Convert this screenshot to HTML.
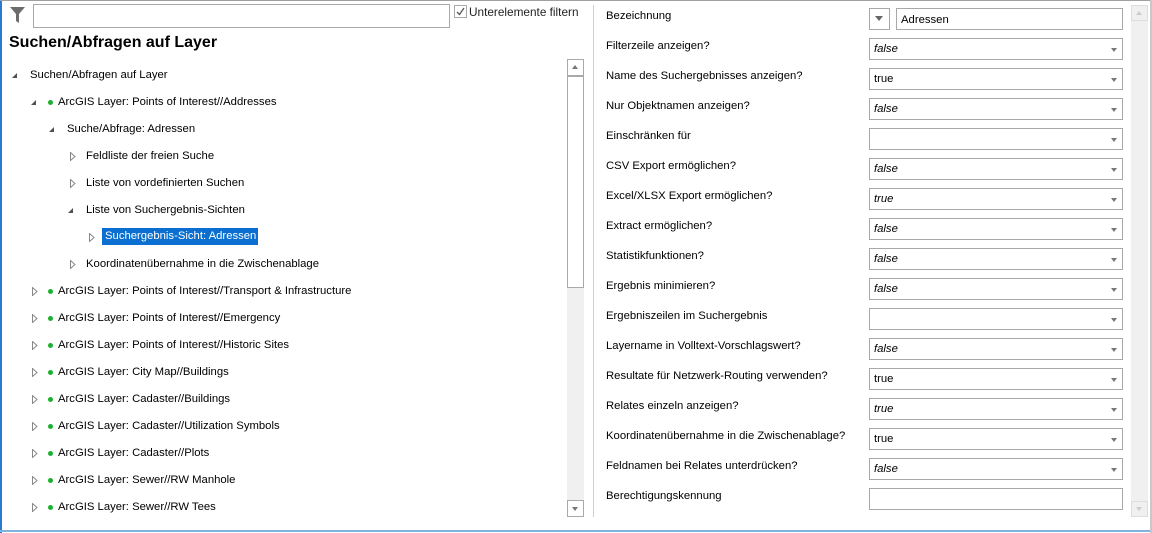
<!DOCTYPE html>
<html><head><meta charset="utf-8"><style>
*{margin:0;padding:0;box-sizing:border-box}
body{width:1152px;height:533px;background:#fff;font-family:"Liberation Sans",sans-serif;font-size:11.3px;color:#000;position:relative;overflow:hidden}
.a{position:absolute;white-space:nowrap}
.r{position:absolute;height:16px;line-height:16px;white-space:nowrap}
.dot{display:inline-block;width:5px;height:5px;border-radius:50%;background:#1db030;position:absolute;top:6px}
.tc{position:absolute;top:6px;width:0;height:0;border-left:5px solid transparent;border-bottom:5px solid #505050}
.box{position:absolute;left:869px;width:254px;height:22px;border:1px solid #a9a9a9;background:#fff;line-height:20px;padding-left:4px}
.box i{font-style:italic}
.arr{position:absolute;right:5px;top:9px;width:0;height:0;border-left:3px solid transparent;border-right:3px solid transparent;border-top:4px solid #777}
.lbl{position:absolute;left:606px;white-space:nowrap;top:0}
</style></head><body>
<div class="a" style="left:0;top:0;width:2px;height:533px;background:#2a7bd0"></div>
<div class="a" style="left:0;top:530px;width:1152px;height:2px;background:#7fb3e0"></div>
<div class="a" style="left:0;top:0;width:1152px;height:1px;background:#a0a0a0"></div>
<div class="a" style="left:1150px;top:0;width:2px;height:533px;background:#c8c8c8"></div>
<svg class="a" style="left:10px;top:7px" width="15" height="16" viewBox="0 0 15 16"><path d="M0 0H15L9 7V16L6 14V7Z" fill="#6d6d6d"/></svg>
<div class="a" style="left:33px;top:4px;width:417px;height:24px;border:1px solid #a9a9a9"></div>
<div class="a" style="left:454px;top:5px;width:13px;height:13px;border:1px solid #a9a9a9"></div>
<svg class="a" style="left:456px;top:7px" width="9" height="9"><path d="M1 5L3.5 7.5L8 1" stroke="#555" fill="none" stroke-width="1.3"/></svg>
<div class="a" style="left:469px;top:5px;line-height:14px;font-size:11.8px;color:#222">Unterelemente filtern</div>
<div class="a" style="left:9px;top:33px;font-size:16px;font-weight:bold;line-height:20px">Suchen/Abfragen auf Layer</div>
<div class="a" style="left:567px;top:59px;width:17px;height:458px;background:#f0f0f0"></div>
<div class="a" style="left:567px;top:59px;width:17px;height:17px;border:1px solid #a9a9a9;background:#fff"></div>
<div class="a" style="left:572px;top:65px;border-left:3px solid transparent;border-right:3px solid transparent;border-bottom:4px solid #777"></div>
<div class="a" style="left:567px;top:76px;width:17px;height:212px;border:1px solid #a9a9a9;background:#fff"></div>
<div class="a" style="left:567px;top:500px;width:17px;height:17px;border:1px solid #a9a9a9;background:#fff"></div>
<div class="a" style="left:572px;top:507px;border-left:3px solid transparent;border-right:3px solid transparent;border-top:4px solid #777"></div>
<div class="r" style="top:67px;left:12px;width:400px"><span class="tc" style="left:0"></span><span style="position:absolute;left:18px">Suchen/Abfragen auf Layer</span></div>
<div class="r" style="top:94px;left:31px;width:400px"><span class="tc" style="left:0"></span><span class="dot" style="left:17px"></span><span style="position:absolute;left:27px">ArcGIS Layer: Points of Interest//Addresses</span></div>
<div class="r" style="top:121px;left:49px;width:400px"><span class="tc" style="left:0"></span><span style="position:absolute;left:18px">Suche/Abfrage: Adressen</span></div>
<div class="r" style="top:148px;left:70px;width:400px"><svg style="position:absolute;left:0;top:4px" width="6" height="9"><path d="M0.5 0.5L5 4.5L0.5 8.5Z" fill="#fff" stroke="#888"/></svg><span style="position:absolute;left:16px">Feldliste der freien Suche</span></div>
<div class="r" style="top:175px;left:70px;width:400px"><svg style="position:absolute;left:0;top:4px" width="6" height="9"><path d="M0.5 0.5L5 4.5L0.5 8.5Z" fill="#fff" stroke="#888"/></svg><span style="position:absolute;left:16px">Liste von vordefinierten Suchen</span></div>
<div class="r" style="top:202px;left:68px;width:400px"><span class="tc" style="left:0"></span><span style="position:absolute;left:18px">Liste von Suchergebnis-Sichten</span></div>
<div class="r" style="top:229px;left:89px;width:400px"><svg style="position:absolute;left:0;top:4px" width="6" height="9"><path d="M0.5 0.5L5 4.5L0.5 8.5Z" fill="#fff" stroke="#888"/></svg><span style="position:absolute;left:13px;top:-1px;height:17px;line-height:17px;background:#0a6fd0;color:#fff;padding:0 2px 0 3px">Suchergebnis-Sicht: Adressen</span></div>
<div class="r" style="top:256px;left:70px;width:400px"><svg style="position:absolute;left:0;top:4px" width="6" height="9"><path d="M0.5 0.5L5 4.5L0.5 8.5Z" fill="#fff" stroke="#888"/></svg><span style="position:absolute;left:16px">Koordinatenübernahme in die Zwischenablage</span></div>
<div class="r" style="top:283px;left:32px;width:500px"><svg style="position:absolute;left:0;top:4px" width="6" height="9"><path d="M0.5 0.5L5 4.5L0.5 8.5Z" fill="#fff" stroke="#888"/></svg><span class="dot" style="left:16px"></span><span style="position:absolute;left:26px">ArcGIS Layer: Points of Interest//Transport &amp; Infrastructure</span></div>
<div class="r" style="top:310px;left:32px;width:500px"><svg style="position:absolute;left:0;top:4px" width="6" height="9"><path d="M0.5 0.5L5 4.5L0.5 8.5Z" fill="#fff" stroke="#888"/></svg><span class="dot" style="left:16px"></span><span style="position:absolute;left:26px">ArcGIS Layer: Points of Interest//Emergency</span></div>
<div class="r" style="top:337px;left:32px;width:500px"><svg style="position:absolute;left:0;top:4px" width="6" height="9"><path d="M0.5 0.5L5 4.5L0.5 8.5Z" fill="#fff" stroke="#888"/></svg><span class="dot" style="left:16px"></span><span style="position:absolute;left:26px">ArcGIS Layer: Points of Interest//Historic Sites</span></div>
<div class="r" style="top:364px;left:32px;width:500px"><svg style="position:absolute;left:0;top:4px" width="6" height="9"><path d="M0.5 0.5L5 4.5L0.5 8.5Z" fill="#fff" stroke="#888"/></svg><span class="dot" style="left:16px"></span><span style="position:absolute;left:26px">ArcGIS Layer: City Map//Buildings</span></div>
<div class="r" style="top:391px;left:32px;width:500px"><svg style="position:absolute;left:0;top:4px" width="6" height="9"><path d="M0.5 0.5L5 4.5L0.5 8.5Z" fill="#fff" stroke="#888"/></svg><span class="dot" style="left:16px"></span><span style="position:absolute;left:26px">ArcGIS Layer: Cadaster//Buildings</span></div>
<div class="r" style="top:418px;left:32px;width:500px"><svg style="position:absolute;left:0;top:4px" width="6" height="9"><path d="M0.5 0.5L5 4.5L0.5 8.5Z" fill="#fff" stroke="#888"/></svg><span class="dot" style="left:16px"></span><span style="position:absolute;left:26px">ArcGIS Layer: Cadaster//Utilization Symbols</span></div>
<div class="r" style="top:445px;left:32px;width:500px"><svg style="position:absolute;left:0;top:4px" width="6" height="9"><path d="M0.5 0.5L5 4.5L0.5 8.5Z" fill="#fff" stroke="#888"/></svg><span class="dot" style="left:16px"></span><span style="position:absolute;left:26px">ArcGIS Layer: Cadaster//Plots</span></div>
<div class="r" style="top:472px;left:32px;width:500px"><svg style="position:absolute;left:0;top:4px" width="6" height="9"><path d="M0.5 0.5L5 4.5L0.5 8.5Z" fill="#fff" stroke="#888"/></svg><span class="dot" style="left:16px"></span><span style="position:absolute;left:26px">ArcGIS Layer: Sewer//RW Manhole</span></div>
<div class="r" style="top:499px;left:32px;width:500px"><svg style="position:absolute;left:0;top:4px" width="6" height="9"><path d="M0.5 0.5L5 4.5L0.5 8.5Z" fill="#fff" stroke="#888"/></svg><span class="dot" style="left:16px"></span><span style="position:absolute;left:26px">ArcGIS Layer: Sewer//RW Tees</span></div>
<div class="a" style="left:593px;top:5px;width:1px;height:512px;background:#d0d0d0"></div>
<div class="a" style="left:1131px;top:5px;width:17px;height:512px;background:#f0f0f0"></div>
<div class="a" style="left:1131px;top:5px;width:17px;height:16px;border:1px solid #ddd"></div>
<div class="a" style="left:1136px;top:11px;border-left:3px solid transparent;border-right:3px solid transparent;border-bottom:4px solid #ccc"></div>
<div class="a" style="left:1131px;top:501px;width:17px;height:16px;border:1px solid #ddd"></div>
<div class="a" style="left:1136px;top:507px;border-left:3px solid transparent;border-right:3px solid transparent;border-top:4px solid #ccc"></div>
<div class="lbl" style="top:10px">Bezeichnung</div>
<div class="a" style="left:869px;top:8px;width:21px;height:22px;border:1px solid #a9a9a9"></div>
<div class="a" style="left:875px;top:16px;border-left:4px solid transparent;border-right:4px solid transparent;border-top:5px solid #666"></div>
<div class="box" style="left:896px;width:227px;top:8px;padding-top:1px">Adressen</div>
<div class="lbl" style="top:40px">Filterzeile anzeigen?</div><div class="box" style="top:38px"><i>false</i><span class="arr"></span></div>
<div class="lbl" style="top:70px">Name des Suchergebnisses anzeigen?</div><div class="box" style="top:68px">true<span class="arr"></span></div>
<div class="lbl" style="top:100px">Nur Objektnamen anzeigen?</div><div class="box" style="top:98px"><i>false</i><span class="arr"></span></div>
<div class="lbl" style="top:130px">Einschränken für</div><div class="box" style="top:128px"><span class="arr"></span></div>
<div class="lbl" style="top:160px">CSV Export ermöglichen?</div><div class="box" style="top:158px"><i>false</i><span class="arr"></span></div>
<div class="lbl" style="top:190px">Excel/XLSX Export ermöglichen?</div><div class="box" style="top:188px"><i>true</i><span class="arr"></span></div>
<div class="lbl" style="top:220px">Extract ermöglichen?</div><div class="box" style="top:218px"><i>false</i><span class="arr"></span></div>
<div class="lbl" style="top:250px">Statistikfunktionen?</div><div class="box" style="top:248px"><i>false</i><span class="arr"></span></div>
<div class="lbl" style="top:280px">Ergebnis minimieren?</div><div class="box" style="top:278px"><i>false</i><span class="arr"></span></div>
<div class="lbl" style="top:310px">Ergebniszeilen im Suchergebnis</div><div class="box" style="top:308px"><span class="arr"></span></div>
<div class="lbl" style="top:340px">Layername in Volltext-Vorschlagswert?</div><div class="box" style="top:338px"><i>false</i><span class="arr"></span></div>
<div class="lbl" style="top:370px">Resultate für Netzwerk-Routing verwenden?</div><div class="box" style="top:368px">true<span class="arr"></span></div>
<div class="lbl" style="top:400px">Relates einzeln anzeigen?</div><div class="box" style="top:398px"><i>true</i><span class="arr"></span></div>
<div class="lbl" style="top:430px">Koordinatenübernahme in die Zwischenablage?</div><div class="box" style="top:428px">true<span class="arr"></span></div>
<div class="lbl" style="top:460px">Feldnamen bei Relates unterdrücken?</div><div class="box" style="top:458px"><i>false</i><span class="arr"></span></div>
<div class="lbl" style="top:490px">Berechtigungskennung</div><div class="box" style="top:488px"></div>
</body></html>
